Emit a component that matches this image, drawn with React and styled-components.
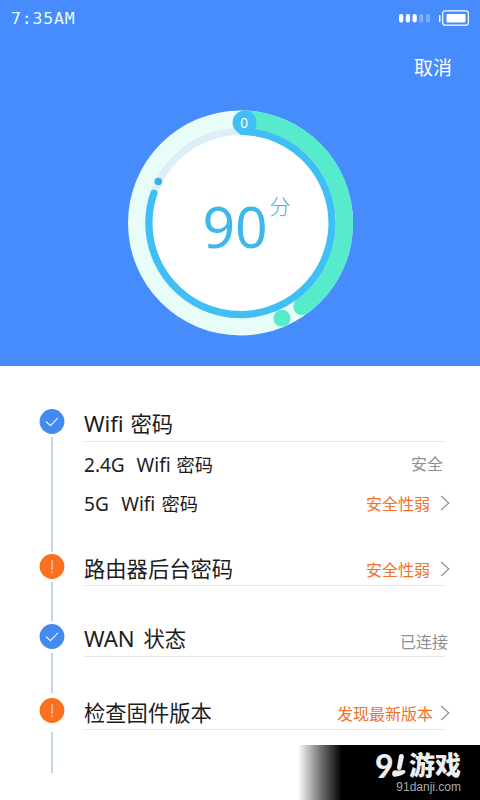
import * as React from 'react';
import styled, { createGlobalStyle } from 'styled-components';

const GlobalStyle = createGlobalStyle`
  * {
    box-sizing: border-box;
  }
  body {
    margin: 0;
    background: #fff;
    font-family: "Noto Sans", "Noto Sans CJK SC", sans-serif;
  }
`;

const Screen = styled.div`
  position: relative;
  width: 480px;
  height: 800px;
  overflow: hidden;
  background: #fff;
`;

const Hero = styled.header`
  display: flex;
  flex-direction: column;
  height: 366px;
  background: #468cfc;
`;

const StatusBar = styled.div`
  display: flex;
  align-items: center;
  justify-content: space-between;
  height: 36px;
  padding: 0 11px;
`;

const Clock = styled.span`
  color: #e4fbff;
  font: 16.5px/36px "DejaVu Sans Mono", monospace;
  letter-spacing: .8px;
  padding-top: 1px;
`;

const Toolbar = styled.div`
  display: flex;
  justify-content: flex-end;
  height: 62px;
  padding: 0 28px;
`;

const Cancel = styled.button`
  padding: 0;
  border: 0;
  background: none;
  color: #fff;
  font: 19px/62px "Noto Sans CJK SC", sans-serif;
`;

const Gauge = styled.svg`
  display: block;
  align-self: center;
  margin-top: 12px;
`;

const Steps = styled.ul`
  margin: 0;
  padding: 43px 28px 0 39px;
  list-style: none;
`;

const Step = styled.li`
  display: flex;
  height: ${p => p.$height}px;
`;

const Rail = styled.div`
  display: flex;
  flex-direction: column;
  align-items: center;
  width: 26px;
  margin-right: 19px;
`;

const Line = styled.div`
  flex: 1;
  width: 2px;
  margin: ${p => p.$gap};
  background: #c1d7e6;
`;

const Body = styled.div`
  width: 361px;
`;

const Heading = styled.div`
  display: flex;
  justify-content: space-between;
  height: ${p => p.$height}px;
  border-bottom: 1px solid #e6e6e6;
`;

const Title = styled.h2`
  margin: 0;
  color: #1c1c1c;
  font-weight: 400;
  font-size: 21.3px;
  line-height: ${p => p.$line || 29}px;
  white-space: pre;
`;

const Item = styled.div`
  display: flex;
  justify-content: space-between;
  height: 39px;
  color: #1c1c1c;
  font-size: 18.3px;
  line-height: 45px;
  white-space: pre;
`;

const Latin = styled.span`
  font-size: 1.04em;
  word-spacing: ${p => p.$space || 0}px;
`;

const Status = styled.span`
  display: flex;
  flex: none;
  align-items: center;
  height: 30px;
  margin: ${p => p.$top || 0}px ${p => p.$right || 0}px 0 0;
  color: ${p => (p.$warn ? '#f2702a' : '#8f8f8f')};
  font: 16px/30px "Noto Sans CJK SC", sans-serif;
`;

const Arrow = styled.svg.attrs({ width: 10, height: 16, viewBox: '0 0 10 16' })`
  margin-left: ${p => p.$gap}px;
`;

const Watermark = styled.footer`
  position: absolute;
  right: 0;
  bottom: 0;
  display: flex;
  flex-direction: column;
  align-items: flex-end;
  width: 182px;
  height: 55px;
  padding: 7px 19px 0 0;
  background: linear-gradient(90deg, rgba(0, 0, 0, 0) 0, #777 22px, #000 44px);
`;

const Brand = styled.div`
  display: flex;
  height: 28px;
  color: #eee;
  font: 900 26px/28px "Liberation Sans", "Noto Sans CJK SC", sans-serif;
`;

const Nine = styled.span`
  width: 17px;
  margin-top: -1px;
  font: 900 32px/30px Lato, sans-serif;
`;

const Foot = styled.svg`
  width: 14px;
  height: 28px;
  margin: -1px 3px 0 0;
`;

const Site = styled.div`
  color: #aaa;
  font: 12px/14px "Liberation Sans", sans-serif;
`;

const Signal = () => (
  <svg width="70" height="16" viewBox="0 0 70 16">
    <g fill="#fff">
      <rect x="0" y="4" width="4.3" height="8.5" rx="2" />
      <rect x="6.8" y="4" width="4.3" height="8.5" rx="2" />
      <rect x="13.5" y="4" width="4.3" height="8.5" rx="2" />
      <rect x="20.3" y="4" width="4" height="8.5" rx="2" opacity=".3" />
      <rect x="27" y="4" width="4" height="8.5" rx="2" opacity=".3" />
      <rect x="40" y="5" width="1.5" height="7" rx=".7" />
      <rect x="47.5" y="4" width="19" height="8.5" rx="1" />
    </g>
    <rect x="43.7" y=".8" width="25.6" height="14.4" rx="2.5" fill="none" stroke="#fff" strokeWidth="1.2" />
  </svg>
);

// drawn in the same units as the 480px wide screen
const Score = () => (
  <Gauge width="226" height="226" viewBox="127 109.5 226 226">
    <circle cx="240.5" cy="222.5" r="112.5" fill="#e8fdf7" />
    <circle cx="240.5" cy="222.5" r="91.6" fill="#fff" stroke="#deeef8" strokeWidth="7.2" />
    <path d="M244.6 118.7A103.8 103.8 0 0 1 302 306.1" fill="none" stroke="#56eccb" strokeWidth="17.4" strokeLinecap="round" />
    <circle cx="282" cy="317.7" r="8.5" fill="#56eccb" />
    <path d="M242.5 130.9A91.6 91.6 0 1 1 153.9 192.6" fill="none" stroke="#40bff4" strokeWidth="7.2" strokeLinecap="round" />
    <circle cx="158.3" cy="181" r="3.8" fill="#36b1e8" />
    <circle cx="244.6" cy="122" r="12" fill="#40bff4" />
    <text x="244" y="127" fill="#fff" fontSize="13.5" textAnchor="middle">0</text>
    <text x="202.5" y="247.5" fill="#3db8ea" fontSize="57">90</text>
    <text x="269.5" y="213" fill="#4da9cf" fontSize="21" fontWeight="300" fontFamily="Noto Sans CJK SC, sans-serif">分</text>
  </Gauge>
);

const Dot = ({ warn }) => (
  <svg width="26" height="25" viewBox="0 0 26 25">
    <circle cx="13" cy="12.5" r="12.4" fill={warn ? '#fb6f1f' : '#4489ef'} />
    {warn ? (
      <g fill="#ffdcae">
        <rect x="12.5" y="6.3" width="1.2" height="9.6" />
        <rect x="12.4" y="17.4" width="1.4" height="1.5" />
      </g>
    ) : (
      <path d="M7 12.5L11.4 16.6L19 8.8" fill="none" stroke="#e5f2ff" strokeWidth="1.2" />
    )}
  </svg>
);

const State = ({ children, warn, gap = 9, ...rest }) => (
  <Status $warn={warn} {...rest}>
    {children}
    {warn && (
      <Arrow $gap={gap}>
        <path d="M1 1L8.8 8L1 15" fill="none" stroke="#8c8c8c" strokeWidth="1.1" />
      </Arrow>
    )}
  </Status>
);

const App = () => (
  <Screen>
    <GlobalStyle />
    <Hero>
      <StatusBar>
        <Clock>7:35AM</Clock>
        <Signal />
      </StatusBar>
      <Toolbar>
        <Cancel>取消</Cancel>
      </Toolbar>
      <Score />
    </Hero>
    <Steps>
      <Step $height={145}>
        <Rail>
          <Dot />
          <Line $gap="3px 0 2px" />
        </Rail>
        <Body>
          <Heading $height={33}>
            <Title><Latin $space={1}>Wifi </Latin>密码</Title>
          </Heading>
          <Item>
            <span><Latin $space={1}>2.4G  Wifi </Latin>密码</span>
            <State $top={6} $right={2}>安全</State>
          </Item>
          <Item>
            <span><Latin $space={1.3}>5G  Wifi </Latin>密码</span>
            <State warn gap={10} $top={7} $right={-5}>安全性弱</State>
          </Item>
        </Body>
      </Step>
      <Step $height={70}>
        <Rail>
          <Dot warn />
          <Line $gap="3px 0" />
        </Rail>
        <Body>
          <Heading $height={32}>
            <Title>路由器后台密码</Title>
            <State warn gap={10} $right={-5}>安全性弱</State>
          </Heading>
        </Body>
      </Step>
      <Step $height={74}>
        <Rail>
          <Dot />
          <Line $gap="4px 0 5px" />
        </Rail>
        <Body>
          <Heading $height={33}>
            <Title $line={28}><Latin $space={3}>WAN </Latin>状态</Title>
            <State $top={2} $right={-3}>已连接</State>
          </Heading>
        </Body>
      </Step>
      <Step $height={75}>
        <Rail>
          <Dot warn />
          <Line $gap="9px 0 0" />
        </Rail>
        <Body>
          <Heading $height={32}>
            <Title>检查固件版本</Title>
            <State warn gap={7} $right={-5}>发现最新版本</State>
          </Heading>
        </Body>
      </Step>
    </Steps>
    <Watermark>
      <Brand>
        <Nine>9</Nine>
        <Foot viewBox="0 0 14 28">
          <path d="M7 4.500C9 2 12.500 3 11.800 6.500L9.500 17C8.800 20 5 20 5 16.500Z" fill="#eee" />
          <path d="M1 20C3 18.200 5.500 20 8 19.500C10.500 18.500 13.500 18.500 13.500 21C13 23.500 4 26.500 1.500 25.500C-.3 24.500 -.2 21.500 1 20Z" fill="#eee" />
        </Foot>
        游戏
      </Brand>
      <Site>91danji.com</Site>
    </Watermark>
  </Screen>
);

export default App;
